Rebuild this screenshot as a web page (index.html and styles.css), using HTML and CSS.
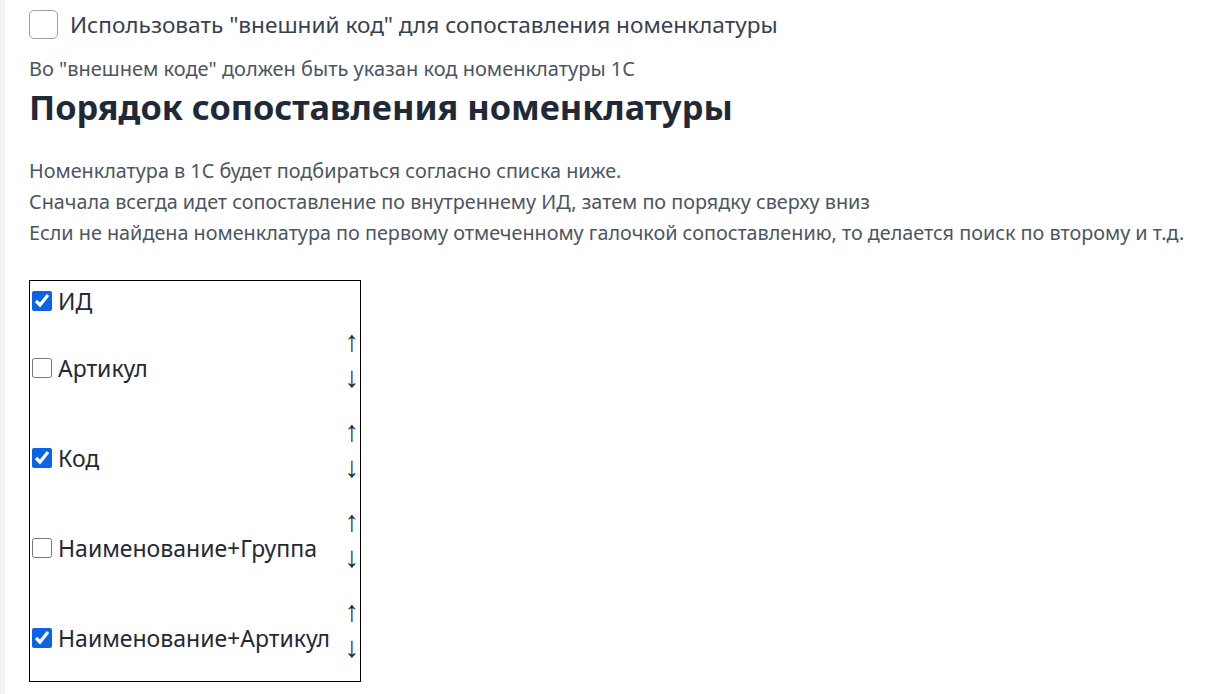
FILE: index.html
```html
<!DOCTYPE html>
<html lang="ru">
<head>
    <meta charset="UTF-8">
    <meta name="viewport" content="width=device-width, initial-scale=1.0">
    <title>Сопоставление номенклатуры</title>
    <link rel="stylesheet" href="styles.css">
</head>
<body>
    <div class="layout">
        <aside class="sidebar"></aside>
        <main class="content">
            <label class="main-check">
                <input type="checkbox" class="check-lg">
                <span>Использовать "внешний код" для сопоставления номенклатуры</span>
            </label>
            <div class="hint">Во "внешнем коде" должен быть указан код номенклатуры 1С</div>

            <h2 class="title">Порядок сопоставления номенклатуры</h2>

            <p class="desc">
                Номенклатура в 1С будет подбираться согласно списка ниже.<br>
                Сначала всегда идет сопоставление по внутреннему ИД, затем по порядку сверху вниз<br>
                Если не найдена номенклатура по первому отмеченному галочкой сопоставлению, то делается поиск по второму и т.д.
            </p>

            <div class="order-list">
                <div class="order-item first">
                    <label class="item-label"><input type="checkbox" checked> ИД</label>
                </div>
                <div class="order-item">
                    <label class="item-label"><input type="checkbox"> Артикул</label>
                    <div class="arrows"><span>&uarr;</span><span>&darr;</span></div>
                </div>
                <div class="order-item">
                    <label class="item-label"><input type="checkbox" checked> Код</label>
                    <div class="arrows"><span>&uarr;</span><span>&darr;</span></div>
                </div>
                <div class="order-item">
                    <label class="item-label"><input type="checkbox"> Наименование+Группа</label>
                    <div class="arrows"><span>&uarr;</span><span>&darr;</span></div>
                </div>
                <div class="order-item">
                    <label class="item-label"><input type="checkbox" checked> Наименование+Артикул</label>
                    <div class="arrows"><span>&uarr;</span><span>&darr;</span></div>
                </div>
            </div>
        </main>
    </div>
</body>
</html>
```

FILE: styles.css
```css
body {
    margin: 0;
    font-family: "Noto Sans", "Open Sans", sans-serif;
    background: #fff;
    color: #4b5563;
}
.layout {
    display: flex;
    min-height: 694px;
}
.sidebar {
    width: 5px;
    flex-shrink: 0;
    background: #f3f4f6;
}
.content {
    padding: 9px 0 0 24px;
}
.main-check {
    display: flex;
    align-items: center;
    gap: 12px;
    font-size: 22.6px;
    color: #374151;
    height: 30px;
}
.check-lg {
    appearance: none;
    width: 29px;
    height: 29px;
    margin: 0;
    border: 1px solid #9ca3af;
    border-radius: 5px;
    background: #fff;
}
.hint {
    margin-top: 16px;
    font-size: 20px;
    line-height: 28px;
}
.title {
    margin: 2px 0 0 0;
    font-size: 34.3px;
    line-height: 44px;
    font-weight: 700;
    color: #1f2937;
}
.desc {
    margin: 26px 0 0 0;
    font-size: 19.8px;
    line-height: 31px;
}
.order-list {
    margin-top: 32px;
    width: 328px;
    border: 1px solid #000;
    padding: 2px 0 16px 2px;
    color: #1f2937;
}
.order-item {
    display: flex;
    justify-content: space-between;
    align-items: center;
    margin-top: 18px;
}
.order-item.first {
    margin-top: 0;
    height: 36px;
}
.order-item.first + .order-item {
    margin-top: 4px;
}
.item-label {
    display: flex;
    align-items: center;
    gap: 6px;
    font-size: 23px;
    margin-top: 18px;
}
.order-item.first .item-label {
    margin-top: 0;
}
.item-label input {
    width: 20px;
    height: 20px;
    margin: 0;
    accent-color: #0b63e5;
}
.arrows {
    display: flex;
    flex-direction: column;
    align-items: center;
    font-family: "Liberation Sans", sans-serif;
    font-size: 29px;
    line-height: 36px;
    color: #1f2937;
    padding-right: 1px;
}
```
